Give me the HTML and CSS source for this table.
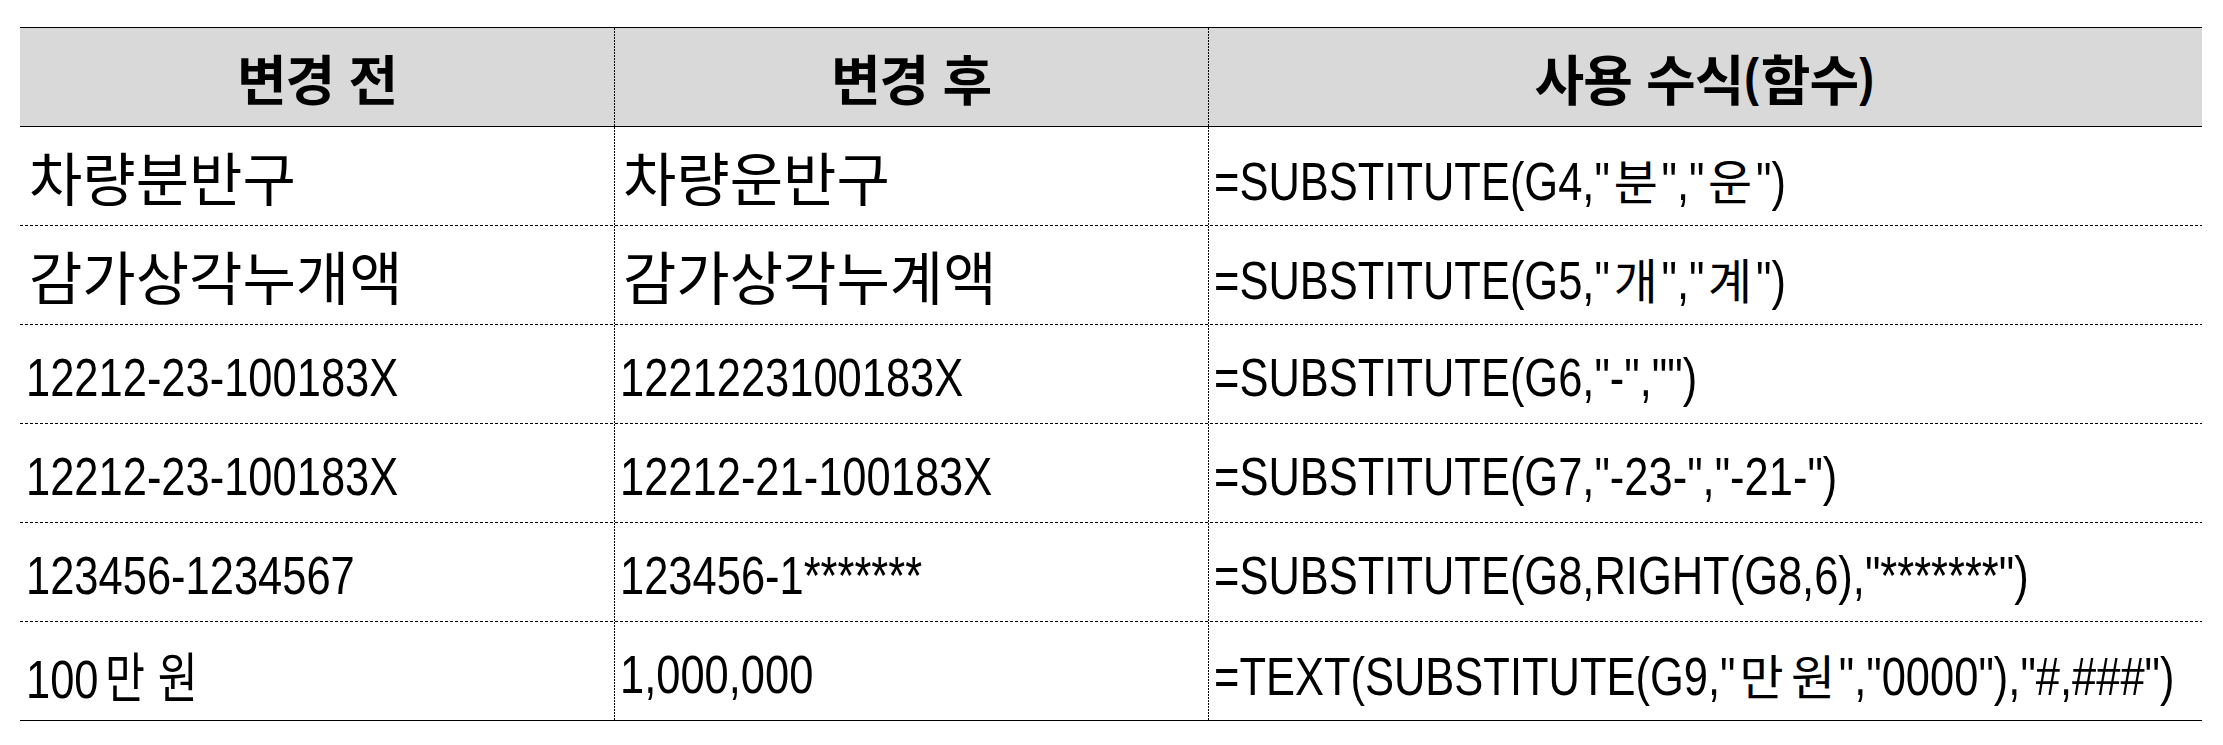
FILE: index.html
```
<!DOCTYPE html>
<html lang="ko">
<head>
<meta charset="utf-8">
<link rel="stylesheet" href="styles.css">
</head>
<body>
<div class="table">
  <div class="row head">
    <div class="cell">변경 전</div>
    <div class="cell">변경 후</div>
    <div class="cell">사용 수식<span class="p">(</span>함수<span class="p">)</span></div>
  </div>
  <div class="row">
    <div class="cell ko">차량분반구</div>
    <div class="cell ko">차량운반구</div>
    <div class="cell lat"><span class="n">=SUBSTITUTE(G4,"<span class="hf">분</span>","<span class="hf">운</span>")</span></div>
  </div>
  <div class="row">
    <div class="cell ko">감가상각누개액</div>
    <div class="cell ko">감가상각누계액</div>
    <div class="cell lat"><span class="n">=SUBSTITUTE(G5,"<span class="hf">개</span>","<span class="hf">계</span>")</span></div>
  </div>
  <div class="row">
    <div class="cell lat"><span class="n">12212-23-100183X</span></div>
    <div class="cell lat"><span class="n">1221223100183X</span></div>
    <div class="cell lat"><span class="n">=SUBSTITUTE(G6,"-","")</span></div>
  </div>
  <div class="row">
    <div class="cell lat"><span class="n">12212-23-100183X</span></div>
    <div class="cell lat"><span class="n">12212-21-100183X</span></div>
    <div class="cell lat"><span class="n">=SUBSTITUTE(G7,"-23-","-21-")</span></div>
  </div>
  <div class="row">
    <div class="cell lat"><span class="n">123456-1234567</span></div>
    <div class="cell lat"><span class="n">123456-1*******</span></div>
    <div class="cell lat"><span class="n">=SUBSTITUTE(G8,RIGHT(G8,6),"*******")</span></div>
  </div>
  <div class="row last">
    <div class="cell lat"><span class="n">100<span class="h">만</span><span class="h">원</span></span></div>
    <div class="cell lat"><span class="n">1,000,000</span></div>
    <div class="cell lat"><span class="n">=TEXT(SUBSTITUTE(G9,"<span class="hf">만</span><span class="hf">원</span>","0000"),"#,###")</span></div>
  </div>
</div>
</body>
</html>
```

FILE: styles.css
```
html, body {
  margin: 0;
  padding: 0;
  background: #ffffff;
}

body {
  font-family: "Noto Sans CJK KR", sans-serif;
  color: #000;
}

.table {
  width: 2182px;
  margin: 27px 0 0 20px;
  border-top: 1px solid #000;
  border-bottom: 1px solid #000;
}

.row {
  display: grid;
  grid-template-columns: 594px 594px 994px;
  height: 99px;
  box-sizing: border-box;
  padding-bottom: 1px;
  background: repeating-linear-gradient(90deg, #000 0 3px, transparent 3px 5px) left bottom / 100% 1px no-repeat;
}

.row.last {
  height: 98px;
  padding-bottom: 0;
  background: none;
}

.row.head {
  height: 99px;
  padding-bottom: 0;
  border-bottom: 1px solid #000;
  background: #d9d9d9;
}

.cell {
  display: flex;
  align-items: center;
  min-width: 0;
  white-space: nowrap;
  box-sizing: border-box;
}

.cell + .cell {
  background: repeating-linear-gradient(180deg, #000 0 2px, transparent 2px 3px) left top / 1px 100% no-repeat;
}

.cell.ko {
  padding-left: 9px;
  font-size: 58px;
  font-family: "Noto Sans CJK KR", sans-serif;
}

.cell.lat {
  padding-left: 6px;
  padding-top: 6px;
}

.n {
  display: inline-block;
  font-family: "Liberation Sans", "Noto Sans CJK KR", sans-serif;
  font-size: 54px;
  transform: scaleX(0.805);
  transform-origin: 0 50%;
}

.h {
  font-family: "Noto Sans CJK KR", sans-serif;
  margin: 0 8px;
}

.hf {
  display: inline-block;
  font-family: "Noto Sans CJK KR", sans-serif;
  font-size: 48px;
  margin: 0 10px;
  transform: scaleX(1.24);
}

.head .cell {
  justify-content: center;
  font-weight: bold;
  font-size: 54px;
  letter-spacing: -1px;
}

.head .p {
  font-family: "Liberation Sans", sans-serif;
  font-size: 52px;
  display: inline-block;
  transform: scaleX(0.85);
  letter-spacing: 0;
}
```
